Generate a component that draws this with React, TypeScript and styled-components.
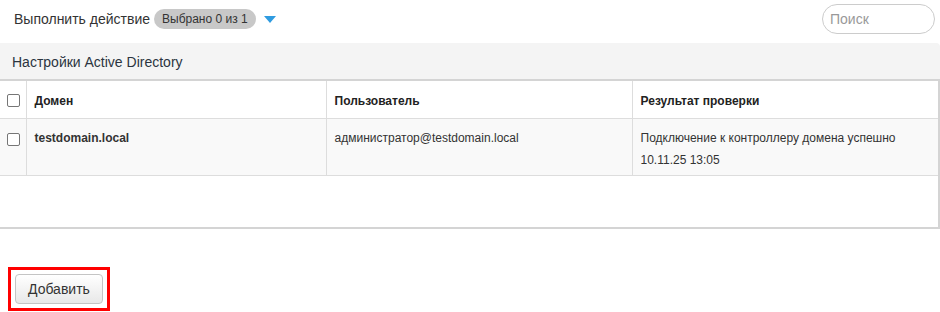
import React from "react";
import styled, { createGlobalStyle } from "styled-components";

const Global = createGlobalStyle`
  html, body { margin: 0; padding: 0; background: #fff; }
  body { font-family: "Liberation Sans", Arial, sans-serif; color: #333; font-size: 13px; }
  * { box-sizing: border-box; }
`;

const Page = styled.div`
  width: 940px;
  display: flex;
  flex-direction: column;
`;

const Toolbar = styled.div`
  height: 43px;
  display: flex;
  align-items: center;
  justify-content: space-between;
  padding: 0 5px 6px 14px;
`;

const ActionGroup = styled.div`
  display: flex;
  align-items: center;
`;

const ActionLabel = styled.span`
  font-size: 14px;
  color: #333;
  margin-right: 4px;
`;

const Badge = styled.span`
  display: inline-flex;
  align-items: center;
  height: 20px;
  padding: 0 8px;
  border-radius: 10px;
  background: #c8c8c8;
  font-size: 12px;
  color: #333;
`;

const Caret = styled.span`
  margin-left: 8px;
  margin-top: 2px;
  width: 0;
  height: 0;
  border-left: 6px solid transparent;
  border-right: 6px solid transparent;
  border-top: 7px solid #2f9be0;
`;

const Search = styled.input`
  width: 113px;
  height: 30px;
  border: 1px solid #ccc;
  border-radius: 15px;
  padding: 0 7px;
  font-family: "Liberation Sans", Arial, sans-serif;
  font-size: 14px;
  color: #333;
  outline: none;
  &::placeholder { color: #999; }
`;

const Panel = styled.div`
  display: flex;
  flex-direction: column;
`;

const PanelHeader = styled.div`
  height: 38px;
  background: #f4f4f4;
  border-top-right-radius: 4px;
  border-bottom: 2px solid #d4d4d4;
  display: flex;
  align-items: center;
  padding: 2px 12px 0;
  font-size: 14px;
  color: #2b3540;
`;

const TableBox = styled.div`
  height: 148px;
  border-right: 2px solid #d4d4d4;
  border-bottom: 2px solid #d4d4d4;
`;

const Table = styled.table`
  width: 100%;
  border-collapse: collapse;
  table-layout: fixed;
`;

const Th = styled.th<{ $w?: number }>`
  ${(p) => (p.$w ? `width: ${p.$w}px;` : "")}
  height: 37px;
  text-align: left;
  font-size: 12px;
  font-weight: bold;
  color: #222;
  padding: 3px 8px 0;
  border-right: 1px solid #ddd;
  border-bottom: 1px solid #ddd;
  &:last-child { border-right: none; }
`;

const Tr = styled.tr`
  background: #f9f9f9;
`;

const Td = styled.td<{ $bold?: boolean }>`
  height: 57px;
  vertical-align: top;
  padding: 8px 8px 0;
  font-size: 12px;
  line-height: 22px;
  color: #333;
  font-weight: ${(p) => (p.$bold ? "bold" : "normal")};
  border-right: 1px solid #ddd;
  border-bottom: 1px solid #ddd;
  &:last-child { border-right: none; }
`;

const CheckCell = styled.div<{ $top?: number }>`
  display: flex;
  justify-content: center;
  margin-left: 1px;
  margin-top: ${(p) => p.$top ?? 0}px;
`;

const Box = styled.span`
  display: block;
  width: 13px;
  height: 13px;
  border: 1px solid #767676;
  border-radius: 2px;
  background: #fff;
`;

const Footer = styled.div`
  padding: 38px 0 0 8px;
`;

const Highlight = styled.div`
  display: inline-flex;
  border: 3px solid #f00;
  padding: 4px;
`;

const Button = styled.button`
  height: 30px;
  padding: 0 12px;
  border: 1px solid #c4c4c4;
  border-radius: 4px;
  background: linear-gradient(#ffffff, #e8e8e8);
  font-family: "Liberation Sans", Arial, sans-serif;
  font-size: 14px;
  color: #333;
`;

export default function App() {
  return (
    <Page>
      <Global />
      <Toolbar>
        <ActionGroup>
          <ActionLabel>Выполнить действие</ActionLabel>
          <Badge>Выбрано 0 из 1</Badge>
          <Caret />
        </ActionGroup>
        <Search placeholder="Поиск" />
      </Toolbar>
      <Panel>
        <PanelHeader>Настройки Active Directory</PanelHeader>
        <TableBox>
          <Table>
            <thead>
              <tr>
                <Th $w={26} style={{ padding: 0 }}>
                  <CheckCell $top={2}>
                    <Box />
                  </CheckCell>
                </Th>
                <Th $w={300}>Домен</Th>
                <Th $w={306}>Пользователь</Th>
                <Th>Результат проверки</Th>
              </tr>
            </thead>
            <tbody>
              <Tr>
                <Td style={{ padding: "14px 0 0" }}>
                  <CheckCell>
                    <Box />
                  </CheckCell>
                </Td>
                <Td $bold>testdomain.local</Td>
                <Td>администратор@testdomain.local</Td>
                <Td>
                  Подключение к контроллеру домена успешно
                  <br />
                  10.11.25 13:05
                </Td>
              </Tr>
            </tbody>
          </Table>
        </TableBox>
      </Panel>
      <Footer>
        <Highlight>
          <Button>Добавить</Button>
        </Highlight>
      </Footer>
    </Page>
  );
}
